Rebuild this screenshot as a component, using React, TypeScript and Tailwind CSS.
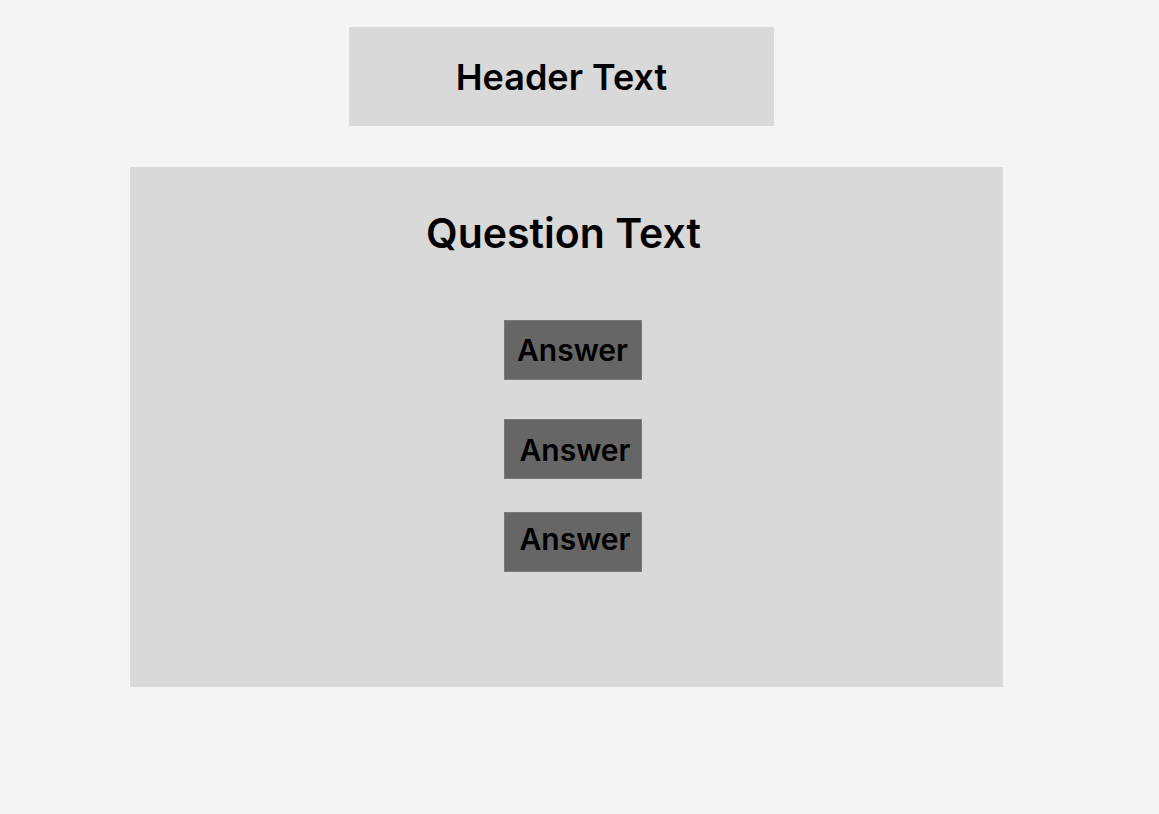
export default function App() {
  return (
    <div
      className="min-h-[814px] w-full bg-[#f4f4f4] text-black"
      style={{ fontFamily: "Inter, 'Liberation Sans', sans-serif" }}
    >
      <div className="flex flex-col items-start pt-[27px]">
        {/* header */}
        <div className="ml-[349px] flex h-[99px] w-[425px] items-center justify-center bg-[#d9d9d9]">
          <h1 className="text-[36px] font-semibold leading-none">Header Text</h1>
        </div>

        {/* question card */}
        <div className="ml-[130px] mt-[41px] flex h-[520px] w-[873px] flex-col items-center bg-[#d9d9d9] pt-[46px]">
          <h2 className="mr-[6px] text-[41px] font-semibold leading-none">Question Text</h2>

          <div className="ml-[12px] mt-[66px] flex flex-col">
            <button className="flex h-[60px] w-[138px] items-center justify-center border border-[#7a7a7a] bg-[#666666] text-[30px] font-semibold leading-none text-black">
              Answer
            </button>
            <button className="mt-[39px] flex h-[60px] w-[138px] items-center justify-center border border-[#7a7a7a] bg-[#666666] pl-[5px] pt-[2px] text-[30px] font-semibold leading-none text-black">
              Answer
            </button>
            <button className="mt-[33px] flex h-[60px] w-[138px] items-center justify-center border border-[#7a7a7a] bg-[#666666] pb-[7px] pl-[5px] text-[30px] font-semibold leading-none text-black">
              Answer
            </button>
          </div>
        </div>
      </div>
    </div>
  );
}
